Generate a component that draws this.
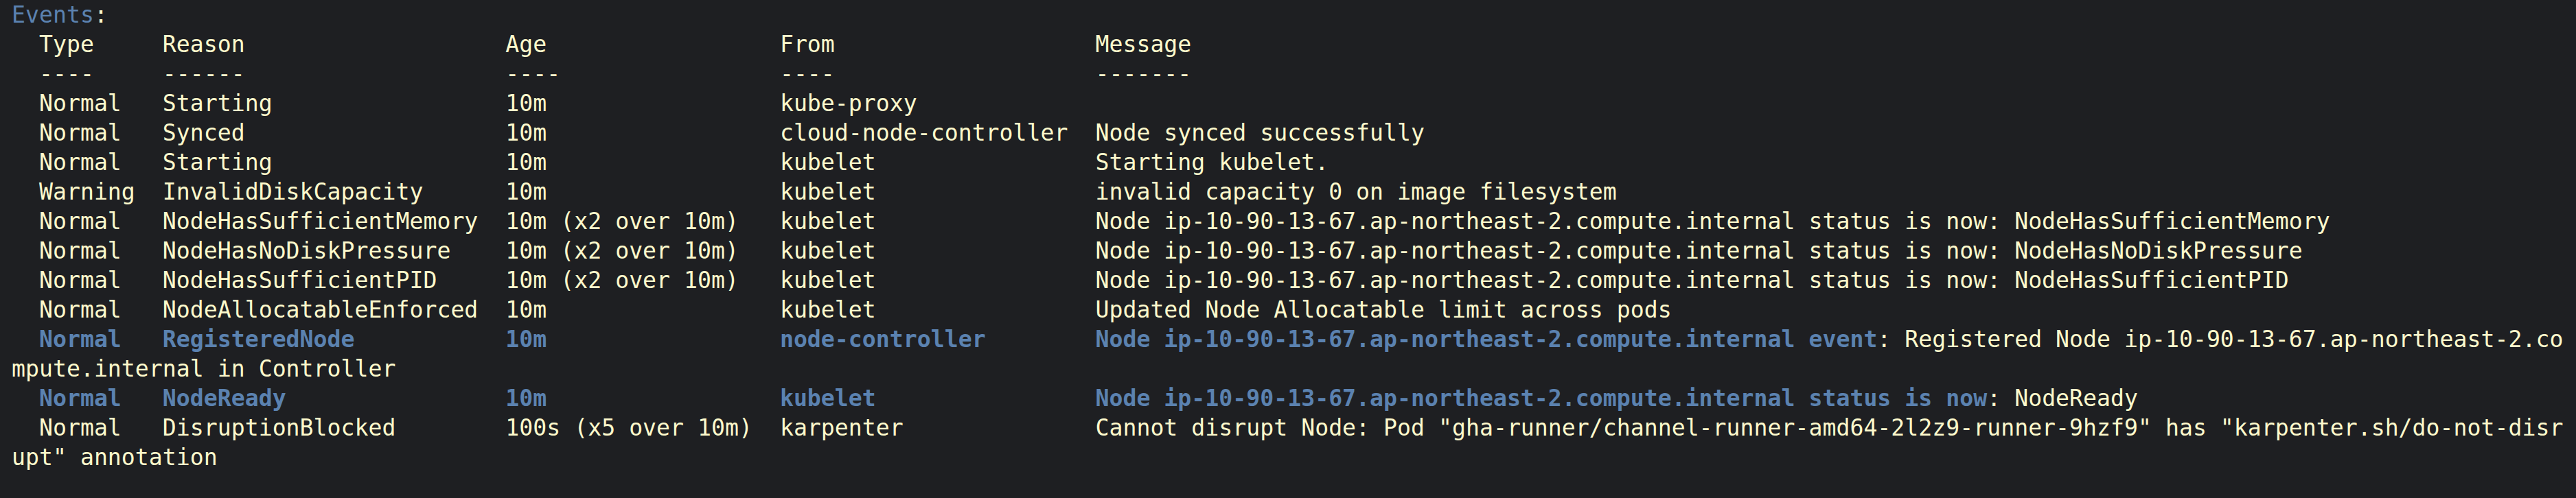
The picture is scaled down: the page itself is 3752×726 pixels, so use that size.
import React from "react";

type Seg = { t: string; c?: "blue" | "cream"; b?: boolean };

// column starts, in characters (terminal is 186 columns wide)
const COLS = [2, 11, 36, 56, 79];
const WIDTH = 186;

const row = (cells: string[]) => {
  let s = "";
  cells.forEach((cell, i) => {
    s = s.padEnd(COLS[i], " ") + cell;
  });
  return s;
};

const host = "ip-10-90-13-67.ap-northeast-2.compute.internal";

const plain: [string, string, string, string, string][] = [
  ["Normal", "Starting", "10m", "kube-proxy", ""],
  ["Normal", "Synced", "10m", "cloud-node-controller", "Node synced successfully"],
  ["Normal", "Starting", "10m", "kubelet", "Starting kubelet."],
  ["Warning", "InvalidDiskCapacity", "10m", "kubelet", "invalid capacity 0 on image filesystem"],
  ["Normal", "NodeHasSufficientMemory", "10m (x2 over 10m)", "kubelet", `Node ${host} status is now: NodeHasSufficientMemory`],
  ["Normal", "NodeHasNoDiskPressure", "10m (x2 over 10m)", "kubelet", `Node ${host} status is now: NodeHasNoDiskPressure`],
  ["Normal", "NodeHasSufficientPID", "10m (x2 over 10m)", "kubelet", `Node ${host} status is now: NodeHasSufficientPID`],
  ["Normal", "NodeAllocatableEnforced", "10m", "kubelet", "Updated Node Allocatable limit across pods"],
];

const registered = `: Registered Node ${host} in Controller`;
const registeredHead = row(["Normal", "RegisteredNode", "10m", "node-controller", `Node ${host} event`]);
const registeredFull = registeredHead + registered;

const readyHead = row(["Normal", "NodeReady", "10m", "kubelet", `Node ${host} status is now`]);

const blocked = row([
  "Normal",
  "DisruptionBlocked",
  "100s (x5 over 10m)",
  "karpenter",
  'Cannot disrupt Node: Pod "gha-runner/channel-runner-amd64-2l2z9-runner-9hzf9" has "karpenter.sh/do-not-disrupt" annotation',
]);

const lines: Seg[][] = [
  [{ t: "Events", c: "blue" }, { t: ":" }],
  [{ t: row(["Type", "Reason", "Age", "From", "Message"]) }],
  [{ t: row(["----", "------", "----", "----", "-------"]) }],
  ...plain.map((r) => [{ t: row(r) }]),
  [
    { t: registeredHead, c: "blue", b: true },
    { t: registeredFull.slice(registeredHead.length, WIDTH) },
  ],
  [{ t: registeredFull.slice(WIDTH) }],
  [{ t: readyHead, c: "blue", b: true }, { t: ": NodeReady" }],
  [{ t: blocked.slice(0, WIDTH) }],
  [{ t: blocked.slice(WIDTH) }],
];

export default function App() {
  return (
    <div className="w-[3752px] h-[726px] bg-[#1e1f22] pl-[17px] overflow-hidden">
      <div className="font-['DejaVu_Sans_Mono',monospace] text-[33.2px] leading-[43px] text-[#fdf9cc]">
        {lines.map((segs, i) => (
          <div key={i} className="whitespace-pre h-[43px]">
            {segs.map((s, j) => (
              <span
                key={j}
                className={`${s.c === "blue" ? "text-[#5b82b0]" : ""} ${s.b ? "font-bold" : ""}`}
              >
                {s.t}
              </span>
            ))}
          </div>
        ))}
      </div>
    </div>
  );
}
